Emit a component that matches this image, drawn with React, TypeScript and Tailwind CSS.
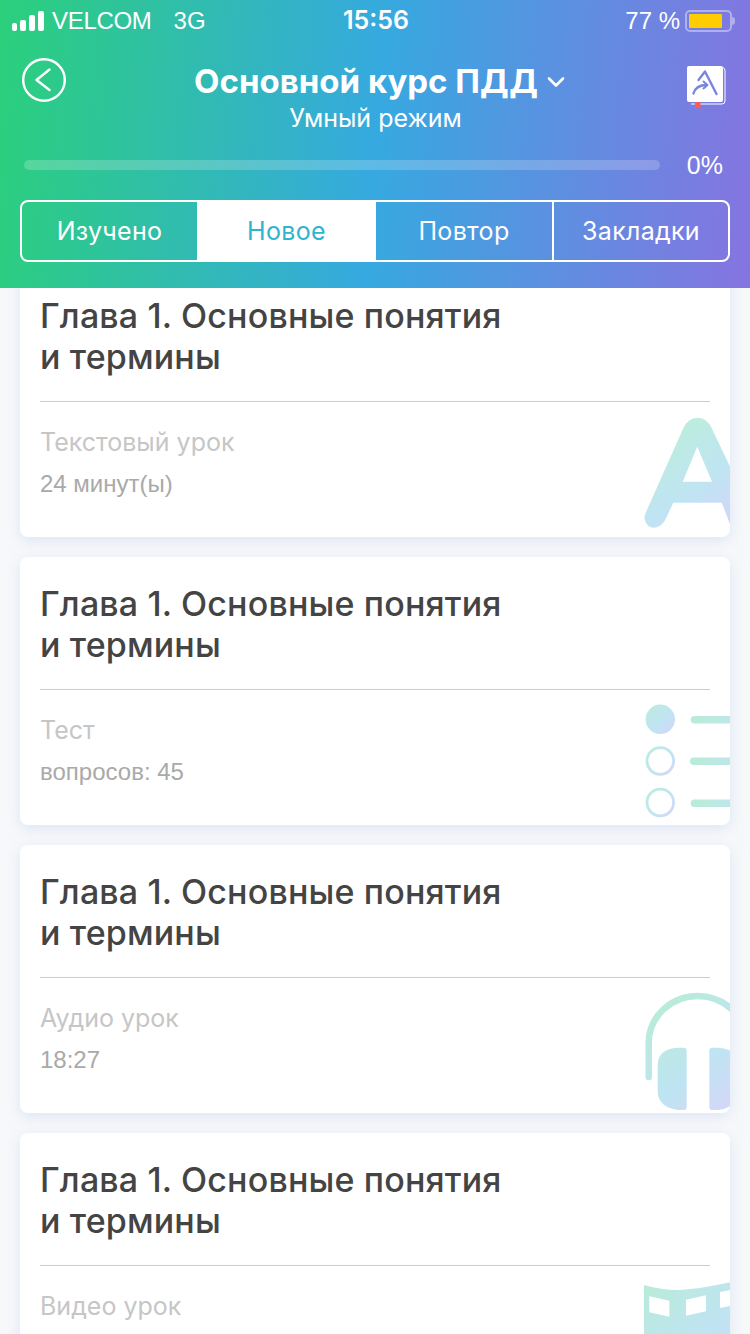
const font = "[font-family:'Liberation_Sans',Arial,sans-serif]";
const inter = "[font-family:Inter,'Liberation_Sans',sans-serif]";

function IconGradient({ id }: { id: string }) {
  return (
    <defs>
      <linearGradient id={id} x1="0" y1="0" x2="1" y2="1">
        <stop offset="0" stopColor="#bcecdc" />
        <stop offset="0.55" stopColor="#c0e4f3" />
        <stop offset="1" stopColor="#d5d6f8" />
      </linearGradient>
    </defs>
  );
}

function LetterIcon() {
  return (
    <svg className="absolute right-0 bottom-0 h-[127px] w-[90px]" viewBox="0 0 90 127">
      <defs>
        <linearGradient id="letter" gradientUnits="userSpaceOnUse" x1="40" y1="20" x2="95" y2="100">
          <stop offset="0" stopColor="#bcecdf" />
          <stop offset="0.6" stopColor="#c0e4f3" />
          <stop offset="1" stopColor="#d0d8f8" />
        </linearGradient>
      </defs>
      <path
        fill="url(#letter)"
        fillRule="evenodd"
        d="M5.7 102.7 L43.3 18.3 Q48 7.7 57.7 7.7 Q67 7.7 71.7 18.3 L130 140 L100 140 L81.7 92.7 L33.3 92.7 L26 108.3 C22 118 12 120 7.5 115 C4 111 4 106 5.7 102.7 Z M57.3 36.7 L42.7 71.7 L72 71.7 Z"
      />
    </svg>
  );
}

function TestIcon() {
  return (
    <svg className="absolute right-0 bottom-0 h-[125px] w-[90px]" viewBox="0 0 90 125">
      <IconGradient id="dot" />
      <linearGradient id="dash" x1="0" y1="0" x2="1" y2="0">
        <stop offset="0" stopColor="#b9ecd6" />
        <stop offset="1" stopColor="#c1e4f3" />
      </linearGradient>
      <circle cx="20.3" cy="19.3" r="14.7" fill="url(#dot)" />
      <circle cx="20.3" cy="61" r="13.3" fill="none" stroke="url(#dot)" strokeWidth="2.8" />
      <circle cx="20.3" cy="102.5" r="13.3" fill="none" stroke="url(#dot)" strokeWidth="2.8" />
      <rect x="50.7" y="16" width="60" height="7.4" rx="3.7" fill="url(#dash)" />
      <rect x="50" y="57.5" width="60" height="7.4" rx="3.7" fill="url(#dash)" />
      <rect x="50.7" y="99.5" width="60" height="7.4" rx="3.7" fill="url(#dash)" />
    </svg>
  );
}

function AudioIcon() {
  return (
    <svg className="absolute right-0 bottom-0 h-[128px] w-[90px]" viewBox="0 0 90 128">
      <defs>
        <linearGradient id="phones" gradientUnits="userSpaceOnUse" x1="5" y1="25" x2="90" y2="125">
          <stop offset="0" stopColor="#b8ecd6" />
          <stop offset="0.6" stopColor="#bfe4f2" />
          <stop offset="1" stopColor="#d5d6f8" />
        </linearGradient>
      </defs>
      <path
        d="M8.7 92 V58 A49 47 0 0 1 106.7 58"
        fill="none"
        stroke="url(#phones)"
        strokeWidth="6.5"
        strokeLinecap="round"
      />
      <path
        fill="url(#phones)"
        d="M43.7 62.7 A3 3 0 0 1 46.7 65.7 V122 A3 3 0 0 1 43.7 125 H38 Q17.7 122 17.7 106 V80 Q17.7 64 38 62.7 Z"
      />
      <path
        fill="url(#phones)"
        d="M72.3 62.7 A3 3 0 0 0 69.3 65.7 V122 A3 3 0 0 0 72.3 125 H78 Q98.3 122 98.3 106 V80 Q98.3 64 78 62.7 Z"
      />
    </svg>
  );
}

function VideoIcon() {
  return (
    <svg className="absolute top-[147px] right-0 h-[121px] w-[90px]" viewBox="0 0 90 121">
      <defs>
        <linearGradient id="film" gradientUnits="userSpaceOnUse" x1="0" y1="0" x2="90" y2="110">
          <stop offset="0" stopColor="#b8ecd6" />
          <stop offset="0.55" stopColor="#bfe4f2" />
          <stop offset="1" stopColor="#d5d6f8" />
        </linearGradient>
      </defs>
      <path
        fill="url(#film)"
        fillRule="evenodd"
        d="M4 5 Q20 10 40 10 Q60 9 90 2.3 V110 H4 Z M9.3 16.3 V32.3 L29.3 36.7 V20.7 Z M46 19.7 V35.7 L66 31.3 V15.3 Z M80 12 V28 L100 24 V8 Z"
      />
    </svg>
  );
}

function SignalBars() {
  return (
    <div className="flex items-end gap-[3px]">
      <span className="h-[8px] w-[5px] rounded-[2px] bg-white" />
      <span className="h-[11px] w-[6px] rounded-[2px] bg-white" />
      <span className="h-[16px] w-[6px] rounded-[2px] bg-white" />
      <span className="h-[20px] w-[6px] rounded-[2px] bg-white" />
    </div>
  );
}

function Battery() {
  return (
    <div className="flex items-center">
      <div className="h-[22px] w-[47px] rounded-[5px] border-2 border-white/40 p-[2px]">
        <div className="h-full w-[33px] rounded-[1px] bg-[#ffcc00]" />
      </div>
      <span className="h-[8px] w-[3px] rounded-r-full bg-white/40" />
    </div>
  );
}

function BackButton() {
  return (
    <svg width="44" height="44" viewBox="0 0 44 44" fill="none" stroke="white">
      <circle cx="22" cy="22" r="20.8" strokeWidth="2.4" />
      <path d="M27.5 11.5 L14.5 22 L27.5 32" strokeWidth="2.4" strokeLinecap="round" strokeLinejoin="round" />
    </svg>
  );
}

function BookLogo() {
  return (
    <svg width="42" height="46" viewBox="0 0 42 46" fill="none">
      <path d="M38 3.5 Q40 4 40 7 V37 Q40 40 37 40 H6" stroke="white" strokeWidth="1" />
      <rect x="2" y="2" width="36" height="36" rx="2" fill="white" />
      <path d="M10 38 H15.5 V45 L12.7 43 L10 45 Z" fill="#ff5a4f" />
      <path
        d="M13.5 16 L20 7.5 L31.5 30"
        stroke="#7a84e2"
        strokeWidth="2.4"
        strokeLinecap="round"
        strokeLinejoin="round"
      />
      <path d="M8.5 29.5 Q11 21 21.5 21" stroke="#7a84e2" strokeWidth="2.4" strokeLinecap="round" />
      <path d="M18.5 17.5 L22.5 21 L18.5 24.5" stroke="#7a84e2" strokeWidth="2" strokeLinecap="round" strokeLinejoin="round" />
    </svg>
  );
}

function Header() {
  return (
    <header className="relative z-10 h-[288px] bg-[linear-gradient(95deg,#2bd07b_0%,#36a9e0_50%,#8674e0_100%)] text-white">
      <div className="grid h-[40px] grid-cols-3 items-center pt-[2px] pr-[15px] pl-[12px] text-[24px]">
        <div className="flex items-center">
          <SignalBars />
          <span className="ml-[8px] tracking-[-0.3px]">VELCOM</span>
          <span className="ml-[22px]">3G</span>
        </div>
        <span className={`pl-[5px] text-center text-[25px] font-semibold ${inter}`}>15:56</span>
        <div className="flex items-center justify-end gap-[5px]">
          <span>77 %</span>
          <Battery />
        </div>
      </div>

      <div className="flex items-start justify-between pt-[18px] pr-[23px] pl-[22px]">
        <BackButton />
        <div className={`ml-[8px] flex flex-col items-center ${inter}`}>
          <div className="flex h-[48px] items-center">
            <span className="text-[33px] font-bold">Основной курс ПДД</span>
            <svg className="ml-[9px]" width="18" height="12" viewBox="0 0 18 12" fill="none">
              <path d="M2 2.5 L9 9.5 L16 2.5" stroke="white" strokeWidth="2.6" strokeLinecap="round" strokeLinejoin="round" />
            </svg>
          </div>
          <span className="-mt-[3px] -ml-[8px] text-[25px] leading-[30px]">Умный режим</span>
        </div>
        <div className="pt-[6px]">
          <BookLogo />
        </div>
      </div>

      <div className="mt-[17px] flex items-center pr-[27px] pl-[24px]">
        <div className="h-[10px] flex-1 rounded-full bg-white/20" />
        <span className="ml-[27px] text-[25px] leading-[30px]">0%</span>
      </div>

      <div className={`mx-[20px] mt-[20px] grid h-[62px] grid-cols-[175px_179px_1fr_1fr] overflow-hidden rounded-[8px] border-2 border-white pt-[1px] text-[25px] tracking-[0.3px] ${inter}`}>
        <div className="flex items-center justify-center">Изучено</div>
        <div className="-mt-[1px] flex items-center justify-center bg-white pt-[1px] text-[#2fb3cf]">Новое</div>
        <div className="flex items-center justify-center">Повтор</div>
        <div className="-mt-[1px] flex items-center justify-center border-l-2 border-white pt-[1px]">Закладки</div>
      </div>
    </header>
  );
}

type LessonCardProps = {
  label: string;
  detail?: string;
  icon: React.ReactNode;
};

function LessonCard({ label, detail, icon }: LessonCardProps) {
  return (
    <article className="relative h-[268px] shrink-0 overflow-hidden rounded-[8px] bg-white px-[20px] pt-[26px]">
      <h2 className={`text-[34px] leading-[41px] font-medium tracking-[0.15px] text-[#444444] ${inter}`}>
        Глава 1. Основные понятия
        <br />
        и термины
      </h2>
      <hr className="mt-[24px] border-[#cccccc]" />
      <p className={`mt-[22px] text-[25px] leading-[36px] text-[#c6c6c6] ${inter}`}>{label}</p>
      {detail && <p className="mt-[8px] text-[24px] leading-[32px] text-[#a9a9a9]">{detail}</p>}
      {icon}
    </article>
  );
}

function CardShell({ children }: { children: React.ReactNode }) {
  return <div className="rounded-[8px] shadow-[0_4px_14px_rgba(200,215,240,0.55)]">{children}</div>;
}

export default function App() {
  return (
    <div className={`h-[1334px] w-[750px] overflow-hidden bg-[#f7f8fa] ${font}`}>
      <Header />
      <main className="-mt-[19px] flex flex-col gap-[20px] px-[20px]">
        <CardShell>
          <LessonCard label="Текстовый урок" detail="24 минут(ы)" icon={<LetterIcon />} />
        </CardShell>
        <CardShell>
          <LessonCard label="Тест" detail="вопросов: 45" icon={<TestIcon />} />
        </CardShell>
        <CardShell>
          <LessonCard label="Аудио урок" detail="18:27" icon={<AudioIcon />} />
        </CardShell>
        <CardShell>
          <LessonCard label="Видео урок" icon={<VideoIcon />} />
        </CardShell>
      </main>
    </div>
  );
}
